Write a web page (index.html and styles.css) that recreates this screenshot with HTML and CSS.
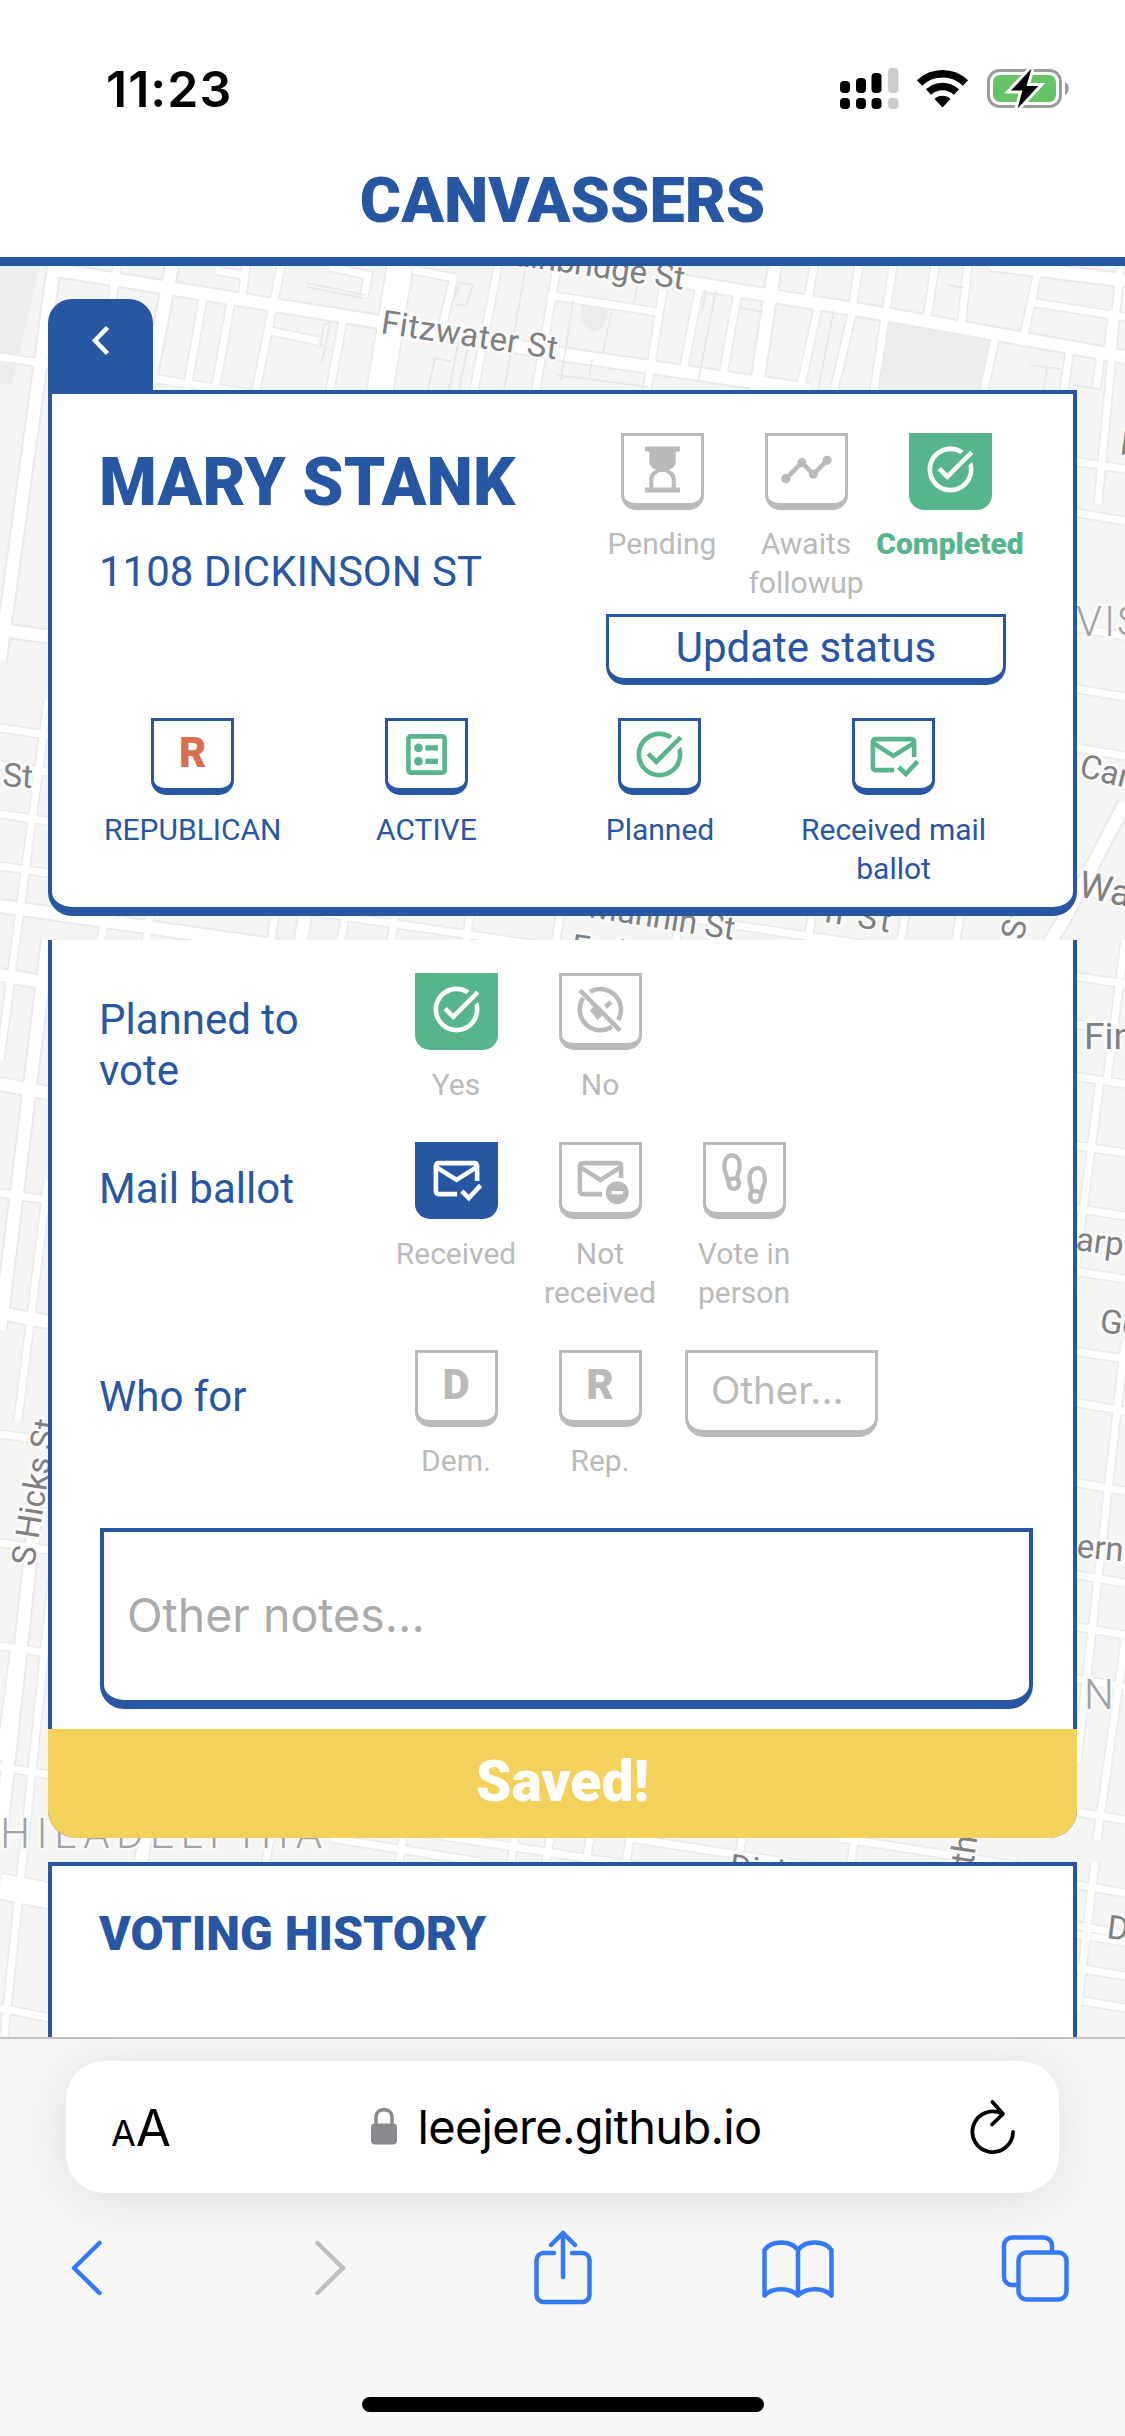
FILE: index.html
```html
<!DOCTYPE html>
<html lang="en">
<head>
<meta charset="utf-8">
<title>Canvassers</title>
<link rel="stylesheet" href="styles.css">
</head>
<body>
<svg class="sprite" aria-hidden="true">
  <symbol id="check" viewBox="0 0 24 24"><path fill="currentColor" d="M22 5.18L10.59 16.6l-4.24-4.24 1.41-1.41 2.83 2.83 10-10zM19.79 10.22c.13.57.21 1.17.21 1.78 0 4.42-3.58 8-8 8s-8-3.58-8-8 3.58-8 8-8c1.58 0 3.04.46 4.28 1.25l1.44-1.44C16.1 2.67 14.13 2 12 2 6.48 2 2 6.48 2 12s4.48 10 10 10 10-4.48 10-10c0-1.19-.22-2.33-.6-3.39z"/></symbol>
  <symbol id="mail-read" viewBox="0 0 24 24"><path fill="none" stroke="currentColor" stroke-width="2" d="M12.3 18.8H4.2a1.2 1.2 0 0 1-1.2-1.2V6.5a1.2 1.2 0 0 1 1.2-1.2h15.6A1.2 1.2 0 0 1 21 6.5v6.6M3 6.900l9 5.700 9-5.700M14.300 17.500l3.100 3L22.500 15"/></symbol>
  <symbol id="hourglass" viewBox="0 0 24 24"><path fill="currentColor" d="M4.400 2h15.200v2.100h-1.800v4.300c0 1.900-1.300 3.300-3.200 3.800 1.900.5 3.200 2.100 3.200 3.900v3.800h1.800V22H4.400v-2.100h1.800v-3.800c0-1.800 1.300-3.400 3.200-3.900-1.900-.5-3.200-1.900-3.200-3.800V4.100H4.400zM8 19.900h8v-3.100c0-2.300-1.800-3.800-4-3.800s-4 1.500-4 3.800z" fill-rule="evenodd"/></symbol>
</svg>

<header class="top">
  <div class="status">
    <span class="time">11:23</span>
    <svg class="sys" width="232" height="44" viewBox="838 66 232 44">
      <g><rect x="840" y="81" width="10" height="12" rx="4"/><rect x="856" y="78" width="10" height="15" rx="4"/><rect x="871.5" y="73" width="10" height="20" rx="4"/><rect x="840" y="98" width="10" height="11" rx="4"/><rect x="856" y="98" width="10" height="11" rx="4"/><rect x="871.5" y="98" width="10" height="11" rx="4"/></g>
      <g fill="#ccc"><rect x="888" y="68" width="10.5" height="25" rx="4"/><rect x="888" y="98" width="10.5" height="11" rx="4"/></g>
      <path fill="none" stroke="#000" stroke-width="7.500" d="M919.5 83a33 33 0 0 1 46 0M928.5 92a20.500 20.500 0 0 1 28 0"/>
      <path d="M942.500 107.500l-8-8.500a11.500 11.500 0 0 1 16 0z"/>
      <rect x="988.500" y="70.500" width="72" height="36" rx="11" fill="none" stroke="#9b9b9b" stroke-width="3"/>
      <rect x="993" y="75" width="63" height="27" rx="7" fill="#65c466"/>
      <path fill="#9b9b9b" d="M1065 82c5 2 5 11 0 13z"/>
      <path stroke="#fff" stroke-width="6" paint-order="stroke" d="M1031.500 68.500l-20.500 22h11.500l-5 18 21-22.500h-12z"/>
    </svg>
  </div>
  <h1>CANVASSERS</h1>
</header>

<main class="page">
  <svg class="map" width="1125" height="1771" viewBox="0 266 1125 1771" aria-hidden="true">
    <defs>
      <g id="minor">
        <path d="M0 728l1125 170M0 765l48 7M0 814l1125 170M0 866l1125 165M0 1193l48 7M0 1434l48 7M0 1543l48 7M0 1646l48 7M0 1767l1125 175M0 2008l60 12M0 357l60 9M150 378l110 17M413 270l42 8M1060 459l65 10M1060 510l65 11M1060 625l65 11M1060 686l65 11M1060 745l65 11M1060 1022l65 10M1060 1074l65 10M1060 1143l65 10M1060 1206l65 10M1060 1269l65 10M1060 1349l65 10M1060 1400l65 11M1060 1480l65 11M1060 1572l65 11M1060 1624l65 11M1060 1676l65 11M1060 1809l65 11M1060 1882l65 11M1060 1923l65 11M1060 1965l65 11M1060 1997l65 11"/>
        <path d="M117 266l-18 124M246 266l-4 32M281 266l-25 124M203 297l-16 93M231 302l-16 88M343 320l-13 70M454 277l-12 50M498 266l-24 124M557 266l-21 124M663 290l-16 100M700 285l-18 92M738 292l-16 88M818 307l-18 83M853 310l-19 80M859 266l-6 37M814 266l-6 34M893 266l-19 124M935 266l-8 54M968 266l-7 61M1039 266l-17 79M996 335l-12 55M1113 310l-6 46M1070 348l-6 42M1101 352l-5 38M1120 269l-22 235M548 295l109 17M1030 302l95 15M215 270l32 6M330 267l38 8-4 22M270 331l48 10"/>
        <path d="M48 700L0 1060M48 1180L18 1420M15 1646L0 1760M52 1580L4 2037M1125 940l-18 140M1100 1080l-30 230M1125 1342l-48 420M1125 1640l-28 200M1095 1862l-18 150"/>
        <path d="M105 916l-4 24M150 916l-4 24M275 916l-4 24M345 916l-4 24M395 916l-4 24M470 916l-4 24M560 916l-4 24M680 916l-4 24M812 916l-4 24M905 916l-4 24M960 916l-4 24"/>
        <path d="M270 1838l-4 24M403 1838l-4 24M515 1838l-4 24M550 1838l-4 24M590 1838l-4 24M630 1838l-4 24M742 1838l-4 24M855 1838l-4 24M330 1838l150 24M630 1838l180 28M840 1838l180 28"/>
      </g>
      <g id="major">
        <path d="M57 270l93 15 230 37 174 31 255 37M674 280l216 35 235 42M990 264l140 17M0 630l60 8M0 906l280 40M0 975l48 8M0 1084l48 9M0 1313l48 9"/>
        <path d="M54 266L0 660M172 266l-24 124M775 266l-19 124M48 940L0 1330M40 1470L0 1840M305 916l-4 24M1125 803l-60 115-15 24M145 1838l-4 24"/>
      </g>
    </defs>
    <rect y="266" width="1125" height="1771" fill="#f5f5f4"/>
    <path fill="#ebeeed" d="M0 266h40L12 385 0 384zM887 319l103 17-9 54H878zM581 304l28 4-4 18-12 6-12-10z"/>
    <use href="#minor" class="casing-s"/><use href="#major" class="casing-l"/>
    <path class="casing-xl" d="M400 266l-21 130M0 1886l60 12"/>
    <use href="#minor" class="road-s"/><use href="#major" class="road-l"/>
    <path class="road-xl" d="M400 266l-21 130M0 1886l60 12"/>
    <path class="alley" d="M307 283l58 12M307 287l56 11M330 322l-6 3-4 22 6-4zM326 345l-5 18M453 302l7-19 13 2-7 21-11-2M428 390l7-32 16 3M459 340l-10 50M469 340l-10 50M526 266l-22 124M573 300l-12 80M612 310l-9 42M640 270l-6 34M706 290l-4 22M716 290l-18 92M592 360l-3 20M558 375l90 12M740 308l24 4M834 309l-16 81M947 285l18 3M1030 365l30 4M1047 368l-3 22M1073 385l26 4"/>
    <g class="street">
      <text transform="translate(380 333) rotate(8.5)" textLength="178">Fitzwater St</text>
      <text transform="translate(492 262) rotate(8.200)" textLength="193">Bainbridge St</text>
      <text x="2" y="786" textLength="30" transform="rotate(4 2 786)">St</text>
      <text transform="translate(34 1567) rotate(-81)" textLength="148">S Hicks St</text>
      <text transform="translate(1119 454) rotate(8)">Ma</text>
      <text transform="translate(1078 776) rotate(14)">Carp</text>
      <text transform="translate(1077 896) rotate(12)" class="bigger">Was</text>
      <text x="1084" y="1049" class="bigger">Fin</text>
      <text transform="translate(1075 1250) rotate(7)">arp</text>
      <text transform="translate(1099 1332) rotate(7)">Ge</text>
      <text transform="translate(1076 1557) rotate(5)">ern</text>
      <text transform="translate(1106 1938) rotate(7)">Di</text>
      <text transform="translate(588 917) rotate(9)" textLength="147">Mannin St</text>
      <text transform="translate(824 922) rotate(9)" textLength="66">n St</text>
      <text transform="translate(570 957) rotate(8)">Federal</text>
      <text transform="translate(1018 972) rotate(-80)" textLength="64">S St</text>
      <text transform="translate(728 1877) rotate(8)">Dickin</text>
      <text transform="translate(970 1884) rotate(-81)">7th</text>
    </g>
    <g class="place">
      <text x="-32" y="1848" textLength="354">PHILADELPHIA</text>
      <text x="1076" y="636" textLength="66">VIS</text>
      <text x="1084" y="1709">N</text>
    </g>
  </svg>

  <div class="content">
    <button class="tab" aria-label="Back"><svg width="20" height="32" viewBox="0 0 20 32"><path fill="none" stroke="#fff" stroke-width="4.500" d="M16.500 2.500L4 15.500l12.500 13"/></svg></button>

    <section class="card profile">
      <div class="who">
        <div class="ident"><h2>MARY STANK</h2><p>1108 DICKINSON ST</p></div>
        <div class="progress">
          <div class="options">
            <div class="opt gray"><span class="key"><svg class="ico"><use href="#hourglass"/></svg></span><span class="lbl">Pending</span></div>
            <div class="opt gray"><span class="key"><svg class="ico" viewBox="0 0 24 24"><path fill="currentColor" d="M23 8c0 1.100-.9 2-2 2-.18 0-.35-.02-.51-.07l-3.560 3.550c.05.16.07.34.07.52 0 1.100-.9 2-2 2s-2-.9-2-2c0-.18.02-.36.07-.52l-2.550-2.550c-.16.05-.34.07-.52.07s-.36-.02-.52-.07l-4.550 4.560c.05.16.07.33.07.51 0 1.100-.9 2-2 2s-2-.9-2-2 .9-2 2-2c.18 0 .35.02.51.07l4.560-4.550C8.020 9.360 8 9.180 8 9c0-1.100.9-2 2-2s2 .9 2 2c0 .18-.02.36-.07.52l2.550 2.550c.16-.05.34-.07.52-.07s.36.02.52.07l3.550-3.560C19.020 8.350 19 8.180 19 8c0-1.100.9-2 2-2s2 .9 2 2z"/></svg></span><span class="lbl">Awaits followup</span></div>
            <div class="opt green"><span class="key solid"><svg class="ico"><use href="#check"/></svg></span><span class="lbl strong">Completed</span></div>
          </div>
          <button class="update">Update status</button>
        </div>
      </div>
      <div class="facts">
        <div class="opt blue"><span class="key letter rep">R</span><span class="lbl">REPUBLICAN</span></div>
        <div class="opt blue"><span class="key tint"><svg class="ico" viewBox="0 0 24 24"><rect x="4.100" y="4.100" width="15.800" height="15.800" rx="1" fill="none" stroke="currentColor" stroke-width="2"/><g fill="currentColor"><circle cx="8.500" cy="9.100" r="1.900"/><circle cx="8.500" cy="15" r="1.900"/><path d="M11.500 8h5.500v2.200h-5.500zM11.500 13.900h5.500v2.200h-5.500z"/></g></svg></span><span class="lbl">ACTIVE</span></div>
        <div class="opt blue"><span class="key tint"><svg class="ico"><use href="#check"/></svg></span><span class="lbl">Planned</span></div>
        <div class="opt blue"><span class="key tint"><svg class="ico"><use href="#mail-read"/></svg></span><span class="lbl">Received mail ballot</span></div>
      </div>
    </section>

    <section class="survey">
      <div class="question"><h3>Planned to vote</h3>
        <div class="options">
          <div class="opt green"><span class="key solid"><svg class="ico"><use href="#check"/></svg></span><span class="lbl muted">Yes</span></div>
          <div class="opt gray"><span class="key"><svg class="ico" viewBox="0 0 24 24"><g fill="none" stroke="currentColor" stroke-width="2"><path d="M7.400 4.300A9 9 0 0 1 19.700 16.600M17 19.500A9 9 0 0 1 4.500 7M3 3.600L20.500 21.100M14.200 11l2.300-2.300"/></g><path fill="currentColor" d="M7.300 12.400l1.500-1.500 4.500 3.200-2.600 2.500z"/></svg></span><span class="lbl">No</span></div>
        </div>
      </div>
      <div class="question"><h3>Mail ballot</h3>
        <div class="options">
          <div class="opt blue"><span class="key solid"><svg class="ico"><use href="#mail-read"/></svg></span><span class="lbl muted">Received</span></div>
          <div class="opt gray"><span class="key"><svg class="ico" viewBox="0 0 24 24"><path fill="none" stroke="currentColor" stroke-width="2" d="M12.700 18.800H4.200A1.200 1.200 0 0 1 3 17.600V6.500a1.200 1.200 0 0 1 1.200-1.200h15.600A1.200 1.200 0 0 1 21 6.500v5.300M3 6.900l9 5.700 9-5.700"/><circle cx="19.300" cy="18.200" r="5" fill="currentColor"/><path stroke="#fff" stroke-width="1.400" d="M16.800 18.200h5"/></svg></span><span class="lbl">Not received</span></div>
          <div class="opt gray"><span class="key"><svg class="ico" viewBox="0 0 24 24"><g fill="none" stroke="currentColor" stroke-width="1.900"><path id="sole" d="M6.400 1.900C4.300 1.900 3.200 4 3.200 6.900c0 2.800 1.500 4.200 1.700 6.200l.3 1.900c.3 1.100 1.300 1.700 2.500 1.500s1.900-1.200 1.900-2.400c0-1.200-.9-1.900-.7-3.100.3-1.500 1-2.500 1-4.600 0-2.700-1.200-4.500-3.500-4.500zM4.900 12.400l4-.7"/><use href="#sole" transform="matrix(-1 0 0 1 24.100 5.600)"/></g></svg></span><span class="lbl">Vote in person</span></div>
        </div>
      </div>
      <div class="question"><h3>Who for</h3>
        <div class="options">
          <div class="opt gray"><span class="key letter">D</span><span class="lbl">Dem.</span></div>
          <div class="opt gray"><span class="key letter">R</span><span class="lbl">Rep.</span></div>
          <div class="other">Other...</div>
        </div>
      </div>
      <div class="notes">Other notes...</div>
      <div class="saved">Saved!</div>
    </section>

    <section class="card history"><h2>VOTING HISTORY</h2></section>
  </div>
</main>

<footer class="browser">
  <div class="address">
    <span class="aa"><small>A</small>A</span>
    <span class="url"><svg width="26" height="37" viewBox="0 0 26 37"><path fill="none" stroke="#8a8a8e" stroke-width="3.500" d="M5 18v-8.500c0-10.500 16-10.500 16 0V18"/><rect y="15.500" width="26" height="21" rx="4" fill="#8a8a8e"/></svg><span>leejere.github.io</span></span>
    <svg class="reload" width="48" height="56" viewBox="0 0 48 56"><g fill="none" stroke="#000" stroke-width="3.800" stroke-linecap="round" stroke-linejoin="round"><path d="M44 33a20.300 20.300 0 1 1-11-18.300"/><path d="M23.500 3l10.500 12-11 10.500"/></g></svg>
  </div>
  <nav class="tools">
    <svg viewBox="-36 0 72 76"><path class="line" d="M12.500 13L-13 38l25.500 25"/></svg>
    <svg class="fwd" viewBox="-36 0 72 76"><path class="line" d="M-12.500 13L13 38l-25.500 25"/></svg>
    <svg class="share" viewBox="-36 0 72 76"><path class="line" d="M-9 23h-10.500a7 7 0 0 0-7 7v35a7 7 0 0 0 7 7h39a7 7 0 0 0 7-7V30a7 7 0 0 0-7-7H9M0 47V3M-12 15L0 3l12 12"/></svg>
    <svg viewBox="-36 0 72 76"><path class="line" d="M0 65.500c-8-8.500-26-8.500-33.500 0V20c7-10 26.500-10 33.500 0zC8 57 26 57 33.500 65.500V20C26.500 10 7 10 0 20z"/></svg>
    <svg viewBox="-36 0 72 76"><path class="line" d="M-17 55h-6a8 8 0 0 1-8-8V15.500a8 8 0 0 1 8-8h32a8 8 0 0 1 8 8V22"/><rect class="line" x="-16.500" y="22.500" width="48" height="47" rx="8"/></svg>
  </nav>
  <div class="home"></div>
</footer>
</body>
</html>
```
FILE: styles.css
```css
:root {
  --blue: #2757a3;
  --green: #57b58e;
  --gray: #bababa;
}
* { box-sizing: border-box; }
body {
  margin: 0;
  width: 1125px;
  height: 2436px;
  overflow: hidden;
  background: #fff;
  color: var(--blue);
  font-family: Roboto, "Liberation Sans", sans-serif;
}
h1, h2, h3, p { margin: 0; }
svg { display: block; flex: none; }
button { font: inherit; color: inherit; padding: 0; }
.sprite { display: none; }

.top { height: 266px; border-bottom: 9px solid var(--blue); background: #fff; }
.status {
  display: flex;
  justify-content: space-between;
  height: 160px;
  padding: 66px 55px 0 106px;
  color: #000;
}
.time { font: 600 50px/46px Inter, sans-serif; letter-spacing: 1px; }
.top h1 { font-size: 63px; line-height: 82px; font-weight: 900; text-align: center; }

.page { position: relative; height: 1771px; overflow: hidden; }
.map { position: absolute; inset: 0; }
.casing-s, .casing-l, .casing-xl { fill: none; stroke: #e8ebea; }
.road-s, .road-l, .road-xl { fill: none; stroke: #fff; }
.casing-s { stroke-width: 10px; }
.casing-l { stroke-width: 16px; }
.casing-xl { stroke-width: 28px; }
.road-s { stroke-width: 7px; }
.road-l { stroke-width: 12px; }
.road-xl { stroke-width: 25px; }
.alley { fill: none; stroke: #e3e7e6; stroke-width: 1.5px; }
.street, .place { font-family: Roboto, sans-serif; paint-order: stroke; stroke: #fafafa; stroke-width: 5px; }
.street { font-size: 33px; fill: #808080; }
.bigger { font-size: 37px; }
.place { font-size: 42px; font-weight: 300; fill: #a2a2a2; }

.content { position: relative; padding: 33px 48px 0; }
.tab {
  display: flex;
  justify-content: center;
  width: 105px;
  height: 91px;
  padding-top: 26px;
  border: 0;
  border-radius: 24px 24px 0 0;
  background: var(--blue);
}
.card { border: 4px solid var(--blue); background: #fff; }
.profile {
  height: 526px;
  padding: 39px 51px 0 24px;
  border-bottom-width: 9px;
  border-radius: 0 0 24px 24px;
}
.who { display: flex; justify-content: space-between; height: 285px; }
.ident { padding: 10px 0 0 23px; }
.ident h2 { font-size: 66px; line-height: 80px; font-weight: 900; letter-spacing: 0.1px; white-space: nowrap; }
.ident p { margin-top: 24px; font-size: 42px; line-height: 50px; white-space: nowrap; }
.progress { width: 432px; }
.options { display: flex; }
.opt { display: flex; flex-direction: column; align-items: center; width: 144px; text-align: center; }
.gray { color: var(--gray); }
.green { color: var(--green); }
.blue { color: var(--blue); }
.key {
  display: flex;
  align-items: center;
  justify-content: center;
  width: 83px;
  height: 77px;
  border: 3px solid currentColor;
  border-bottom-width: 7px;
  border-radius: 0 0 15px 15px;
}
.key.solid { background: currentColor; }
.key.solid .ico { color: #fff; }
.tint .ico { color: var(--green); }
.ico { width: 55px; height: 55px; overflow: visible; }
.letter { padding-bottom: 4px; font-size: 42px; font-weight: 900; line-height: 50px; }
.rep { color: #d9704d; border-color: var(--blue); }
.lbl { margin-top: 15px; font-size: 30px; line-height: 39px; }
.lbl.strong { font-weight: 900; }
.muted { color: var(--gray); }
.progress .opt { height: 181px; }
.progress .lbl { margin-top: 14px; }
.update {
  display: block;
  width: 400px;
  height: 71px;
  margin-left: 16px;
  border: 3px solid;
  border-bottom-width: 7px;
  border-radius: 0 0 19px 19px;
  background: #fff;
  font-size: 42px;
  line-height: 60px;
}
.facts { display: grid; grid-template-columns: repeat(4, 233.6px); }
.facts .opt { width: auto; padding: 0 16px; }

.survey {
  height: 898px;
  margin-top: 24px;
  border: 4px solid var(--blue);
  border-width: 0 4px;
  padding: 33px 40px 0 47px;
  background: #fff;
  border-radius: 0 0 28px 28px;
}
.question { display: grid; grid-template-columns: 285px 1fr; height: 169px; }
.question h3 { width: 230px; margin-top: 21px; font-size: 42px; line-height: 51px; font-weight: 400; }
.question:nth-child(2) { height: 208px; }
.question:nth-child(3) { height: 178px; }
.question:nth-child(3) .lbl { margin-top: 14px; }
.question .opt { padding: 0 12px; }
.other {
  width: 193px;
  height: 87px;
  margin-left: 13px;
  padding-left: 23px;
  border: 3px solid var(--gray);
  border-bottom-width: 7px;
  border-radius: 0 0 19px 19px;
  color: var(--gray);
  font: 400 38.500px/75px Inter, sans-serif;
}
.notes {
  width: 933px;
  height: 181px;
  margin-left: 1px;
  padding-left: 23px;
  border: 4px solid var(--blue);
  border-bottom-width: 9px;
  border-radius: 0 0 24px 24px;
  color: #aaa;
  font: 400 46.500px/166px Inter, sans-serif;
}
.saved {
  height: 109px;
  margin: 20px -44px 0 -51px;
  border-radius: 0 0 28px 28px;
  background: #f4d15a;
  color: #fff;
  font-size: 57px;
  font-weight: 900;
  line-height: 105px;
  text-align: center;
}
.history { height: 200px; margin-top: 24px; padding: 38px 47px; border-bottom: 0; }
.history h2 { font-size: 48px; line-height: 60px; font-weight: 900; }

.browser {
  position: relative;
  height: 399px;
  padding: 22px 66px 0;
  border-top: 2px solid #bfc1c1;
  background: #f7f7f7;
  overflow: hidden;
}
.address {
  display: flex;
  align-items: center;
  justify-content: space-between;
  height: 132px;
  padding: 0 42px 0 45px;
  border-radius: 38px;
  background: #fff;
  box-shadow: 0 6px 50px rgba(0, 0, 0, 0.1);
  color: #000;
  font-family: Inter, sans-serif;
}
.aa { width: 70px; font-size: 51px; white-space: nowrap; }
.aa small { font-size: 36px; }
.url { display: flex; align-items: center; gap: 21px; font-size: 47px; letter-spacing: -0.7px; transform: translate(-9px, -1px); }
.tools { display: flex; justify-content: space-between; margin: 37px -12px 0 -15.5px; }
.tools svg { width: 72px; height: 76px; color: #347af6; }
.tools .fwd { position: relative; left: 6px; color: #bfbfbf; }
.tools .share { position: relative; left: 2px; }
.line { fill: none; stroke: currentColor; stroke-width: 4.500px; stroke-linecap: round; stroke-linejoin: round; }
.home { width: 402px; height: 15px; margin: 91px auto 0; border-radius: 8px; background: #000; }
```
